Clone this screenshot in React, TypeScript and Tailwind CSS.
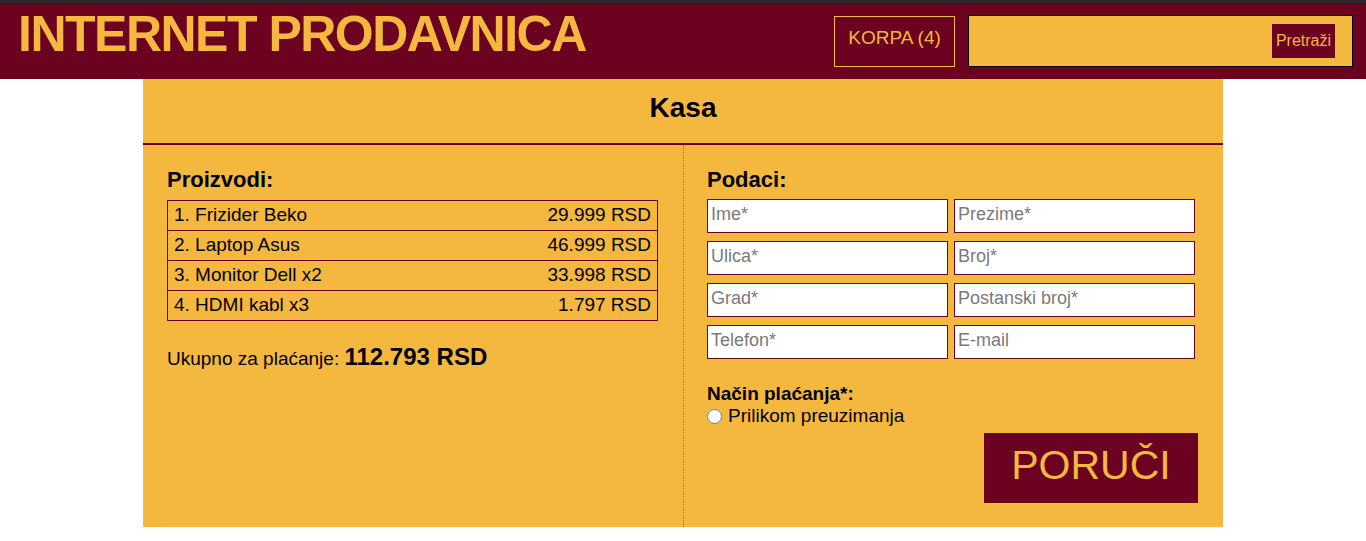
import React from "react";

const items = [
  { name: "1. Frizider Beko", price: "29.999 RSD" },
  { name: "2. Laptop Asus", price: "46.999 RSD" },
  { name: "3. Monitor Dell x2", price: "33.998 RSD" },
  { name: "4. HDMI kabl x3", price: "1.797 RSD" },
];

const fields = [
  "Ime*",
  "Prezime*",
  "Ulica*",
  "Broj*",
  "Grad*",
  "Postanski broj*",
  "Telefon*",
  "E-mail",
];

export default function App() {
  return (
    <div className="min-h-[541px] bg-white font-['Liberation_Sans',Arial,sans-serif] text-black">
      <div className="h-[3px] bg-[#2b2b2b]" />
      <header className="flex h-[76px] items-center justify-between bg-[#6a0220] pl-[18px] pr-[13px]">
        <h1 className="-mt-[14px] text-[50px] font-bold leading-none tracking-[-1.5px] text-[#f5b83f]">
          INTERNET PRODAVNICA
        </h1>
        <div className="flex items-center gap-[13px]">
          <div className="flex h-[51px] w-[121px] items-center justify-center border border-[#f5b83f] pb-[5px] text-[19px] text-[#f5b83f]">
            KORPA (4)
          </div>
          <div className="flex h-[52px] w-[385px] items-center justify-end border border-black bg-[#f5b83f] pr-[17px]">
            <button className="h-[34px] w-[63px] bg-[#6a0220] text-[16px] text-[#f5b83f]">
              Pretraži
            </button>
          </div>
        </div>
      </header>

      <main className="mx-auto w-[1080px] bg-[#f5b83f]">
        <div className="flex h-[66px] items-center justify-center border-b-2 border-[#6a0220] pb-[6px]">
          <h2 className="text-[28px] font-bold">Kasa</h2>
        </div>
        <div className="flex h-[382px]">
          <section className="w-[540px] pl-[24px] pr-[25px] pt-[22px]">
            <h3 className="mb-[7px] text-[22px] font-bold leading-[26px]">Proizvodi:</h3>
            <div className="border border-[#6a0220]">
              {items.map((it, i) => (
                <div
                  key={it.name}
                  className={
                    "flex items-center justify-between px-[6px] text-[19px] " +
                    (i > 0 ? "h-[30px] border-t border-[#6a0220]" : "h-[29px]")
                  }
                >
                  <span>{it.name}</span>
                  <span>{it.price}</span>
                </div>
              ))}
            </div>
            <p className="mt-[18px] text-[19px]">
              Ukupno za plaćanje: <span className="text-[24px] font-bold">112.793 RSD</span>
            </p>
          </section>
          <section className="w-[540px] border-l border-dotted border-[#b5651d] pl-[23px] pr-[28px] pt-[22px]">
            <h3 className="mb-[6px] text-[22px] font-bold leading-[26px]">Podaci:</h3>
            <div className="grid grid-cols-2 gap-x-[6px] gap-y-[8px]">
              {fields.map((f) => (
                <input
                  key={f}
                  placeholder={f}
                  className="h-[34px] w-full border border-[#6a0220] bg-white px-[3px] pb-[3px] text-[18px] placeholder:text-[#7a7a7a] outline-none"
                />
              ))}
            </div>
            <p className="mt-[24px] text-[19px] font-bold leading-[22px]">Način plaćanja*:</p>
            <label className="flex items-center gap-[6px] text-[19px] leading-[22px]">
              <input type="radio" className="h-[15px] w-[15px]" />
              Prilikom preuzimanja
            </label>
            <div className="mt-[6px] flex justify-end">
              <button className="-mr-[3px] h-[70px] w-[214px] bg-[#6a0220] pb-[4px] text-[41px] text-[#f5b83f]">
                PORUČI
              </button>
            </div>
          </section>
        </div>
      </main>
    </div>
  );
}
